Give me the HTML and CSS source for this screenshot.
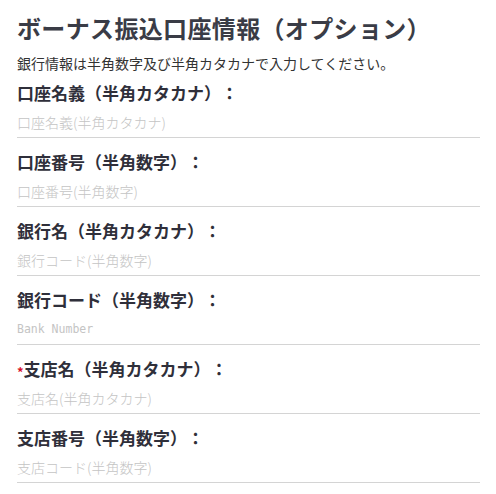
FILE: index.html
```html
<!DOCTYPE html>
<html lang="ja">
<head>
    <meta charset="UTF-8">
    <meta name="viewport" content="width=device-width, initial-scale=1.0">
    <title>ボーナス振込口座情報</title>
    <link rel="stylesheet" href="styles.css">
</head>
<body>
    <div class="bank-form">
        <h2 class="form-title">ボーナス振込口座情報（オプション）</h2>
        <p class="form-note">銀行情報は半角数字及び半角カタカナで入力してください。</p>

        <div class="field">
            <label class="field-label" for="accountName">口座名義（半角カタカナ）：</label>
            <input class="field-input" id="accountName" type="text" placeholder="口座名義(半角カタカナ)">
        </div>
        <div class="field">
            <label class="field-label" for="accountNumber">口座番号（半角数字）：</label>
            <input class="field-input" id="accountNumber" type="text" placeholder="口座番号(半角数字)">
        </div>
        <div class="field">
            <label class="field-label" for="bankName">銀行名（半角カタカナ）：</label>
            <input class="field-input" id="bankName" type="text" placeholder="銀行コード(半角数字)">
        </div>
        <div class="field">
            <label class="field-label" for="bankCode">銀行コード（半角数字）：</label>
            <input class="field-input mono" id="bankCode" type="text" placeholder="Bank Number">
        </div>
        <div class="field">
            <label class="field-label" for="branchName"><span class="required">*</span>支店名（半角カタカナ）：</label>
            <input class="field-input" id="branchName" type="text" placeholder="支店名(半角カタカナ)">
        </div>
        <div class="field">
            <label class="field-label" for="branchCode">支店番号（半角数字）：</label>
            <input class="field-input" id="branchCode" type="text" placeholder="支店コード(半角数字)">
        </div>
    </div>
</body>
</html>
```

FILE: styles.css
```css
body {
    margin: 0;
    background-color: #fff;
    font-family: 'Noto Sans CJK JP', 'Noto Sans', sans-serif;
    color: #333;
    text-spacing-trim: space-all;
}

.bank-form {
    width: 463px;
    padding: 12px 0 0 17px;
}

.form-title {
    margin: 0;
    font-size: 24px;
    letter-spacing: 0.35px;
    line-height: 32px;
    font-weight: bold;
    color: #3a3c46;
}

.form-note {
    margin: 10px 0 0;
    font-size: 14px;
    line-height: 18px;
    color: #333;
}

.field {
    display: flex;
    flex-direction: column;
    border-bottom: 1px solid #d4d4d4;
    padding: 13px 0 5px;
}

.form-note + .field {
    padding-top: 10px;
}

.field-label {
    font-size: 17px;
    line-height: 22px;
    height: 22px;
    font-weight: bold;
    color: #2f2f3a;
}

.required {
    color: #d8102a;
    font-size: 13px;
    line-height: 0;
    font-weight: bold;
    vertical-align: -1px;
}

.field-input {
    border: none;
    outline: none;
    padding: 0;
    margin-top: 8px;
    font-family: inherit;
    font-size: 14px;
    font-weight: 300;
    line-height: 20px;
    height: 20px;
    background: transparent;
}

.field-input::placeholder {
    color: #c4c4c4;
}

.field-input.mono {
    font-family: 'DejaVu Sans Mono', monospace;
    font-size: 11.5px;
    font-weight: normal;
}
```
